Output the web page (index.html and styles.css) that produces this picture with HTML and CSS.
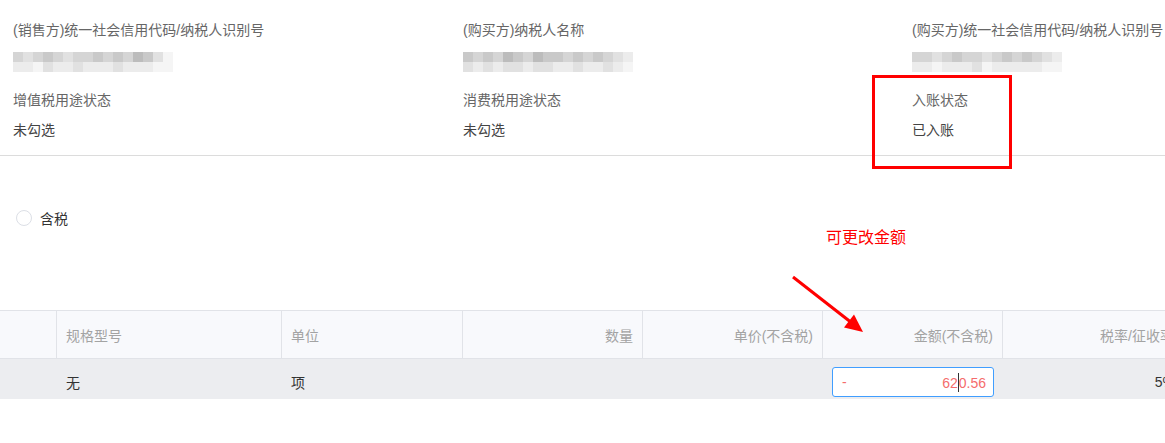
FILE: index.html
```html
<!DOCTYPE html>
<html lang="zh-CN">
  <head>
    <meta charset="UTF-8">
    <meta name="viewport" content="width=device-width, initial-scale=1.0">
    <title>发票明细</title>
    <link rel="stylesheet" href="styles.css">
  </head>
  <body>

    <div class="page">

      <section class="summary">
        <div class="col">
          <div class="field">
            <div class="label">(销售方)统一社会信用代码/纳税人识别号</div>
            <div class="value">
              <div class="mosaic">
                <div class="mosaic-row"><i class="m3"></i><i class="m4"></i><i class="m3"></i><i class="m2"></i><i class="m3"></i><i class="m4"></i><i class="m3"></i><i class="m3"></i><i class="m2"></i><i class="m3"></i><i class="m2"></i><i class="m3"></i><i class="m1"></i><i class="m2"></i><i class="m4"></i><i class="m6"></i></div>
                <div class="mosaic-row"><i class="m5"></i><i class="m5"></i><i class="m6"></i><i class="m4"></i><i class="m5"></i><i class="m5"></i><i class="m4"></i><i class="m5"></i><i class="m5"></i><i class="m5"></i><i class="m4"></i><i class="m5"></i><i class="m5"></i><i class="m5"></i><i class="m6"></i><i class="m6"></i></div>
              </div>
            </div>
          </div>
          <div class="field">
            <div class="label">增值税用途状态</div>
            <div class="value">未勾选</div>
          </div>
        </div>

        <div class="col">
          <div class="field">
            <div class="label">(购买方)纳税人名称</div>
            <div class="value">
              <div class="mosaic">
                <div class="mosaic-row"><i class="m2"></i><i class="m3"></i><i class="m2"></i><i class="m3"></i><i class="m1"></i><i class="m2"></i><i class="m3"></i><i class="m1"></i><i class="m2"></i><i class="m2"></i><i class="m3"></i><i class="m2"></i><i class="m3"></i><i class="m2"></i><i class="m3"></i><i class="m4"></i><i class="m5"></i></div>
                <div class="mosaic-row"><i class="m4"></i><i class="m5"></i><i class="m4"></i><i class="m5"></i><i class="m4"></i><i class="m4"></i><i class="m5"></i><i class="m4"></i><i class="m4"></i><i class="m5"></i><i class="m5"></i><i class="m4"></i><i class="m5"></i><i class="m5"></i><i class="m4"></i><i class="m5"></i><i class="m6"></i></div>
              </div>
            </div>
          </div>
          <div class="field">
            <div class="label">消费税用途状态</div>
            <div class="value">未勾选</div>
          </div>
        </div>

        <div class="col">
          <div class="field">
            <div class="label">(购买方)统一社会信用代码/纳税人识别号</div>
            <div class="value">
              <div class="mosaic">
                <div class="mosaic-row"><i class="m3"></i><i class="m3"></i><i class="m4"></i><i class="m3"></i><i class="m2"></i><i class="m3"></i><i class="m3"></i><i class="m4"></i><i class="m3"></i><i class="m2"></i><i class="m3"></i><i class="m2"></i><i class="m3"></i><i class="m4"></i><i class="m5"></i></div>
                <div class="mosaic-row"><i class="m5"></i><i class="m5"></i><i class="m6"></i><i class="m5"></i><i class="m5"></i><i class="m5"></i><i class="m4"></i><i class="m6"></i><i class="m5"></i><i class="m5"></i><i class="m5"></i><i class="m5"></i><i class="m5"></i><i class="m6"></i><i class="m6"></i></div>
              </div>
            </div>
          </div>
          <div class="field marked">
            <div class="label">入账状态</div>
            <div class="value">已入账</div>
            <span class="mark-box"></span>
          </div>
        </div>
      </section>

      <section class="options">
        <label class="radio"><span class="radio-dot"></span>含税</label>
        <div class="note">可更改金额</div>
      </section>

      <section class="lines">
        <div class="row head">
          <div class="cell"></div>
          <div class="cell">规格型号</div>
          <div class="cell">单位</div>
          <div class="cell num">数量</div>
          <div class="cell num">单价(不含税)</div>
          <div class="cell num">金额(不含税)</div>
          <div class="cell num">税率/征收率</div>
        </div>
        <div class="row body">
          <div class="cell"></div>
          <div class="cell">无</div>
          <div class="cell">项</div>
          <div class="cell num"></div>
          <div class="cell num"></div>
          <div class="cell">
            <div class="amount-input">
              <span class="sign">-</span>
              <span class="amount">62<span class="caret"></span>0.56</span>
            </div>
          </div>
          <div class="cell num">5%</div>
        </div>
      </section>

      <svg class="arrow" width="90" height="80" viewBox="0 0 90 80">
        <line x1="13" y1="17" x2="70" y2="61.5" stroke="#ff0000" stroke-width="3"/>
        <polygon points="83,72 64,67.5 74,54.5" fill="#ff0000"/>
      </svg>

    </div>

  </body>
</html>
```

FILE: styles.css
```css
html, body {
  margin: 0;
  padding: 0;
  box-sizing: border-box;
}
*, *:before, *:after {
  box-sizing: inherit;
}
body {
  width: 1165px;
  height: 443px;
  overflow: hidden;
  background-color: #fff;
  font-family: 'Liberation Sans', 'Noto Sans CJK SC', sans-serif;
  font-size: 14px;
  color: #333;
}
.page {
  position: relative;
  width: 1165px;
  height: 443px;
  overflow: hidden;
}

/* top summary */
.summary {
  display: grid;
  grid-template-columns: 450px 449px 1fr;
  padding: 20px 0 15px 13px;
  border-bottom: 1px solid #dcdcdc;
}
.field + .field {
  margin-top: 20px;
}
.field.marked {
  position: relative;
}
.label {
  line-height: 20px;
  height: 20px;
  color: #666;
  white-space: nowrap;
}
.value {
  margin-top: 10px;
  line-height: 20px;
  height: 20px;
  color: #444;
}
.mosaic {
  padding-top: 2px;
  filter: blur(0.5px);
}
.mosaic-row {
  display: flex;
  height: 10px;
}
.mosaic-row i {
  display: block;
  width: 10px;
  height: 10px;
}
.m1 { background-color: #bcbcbc; }
.m2 { background-color: #c9c9c9; }
.m3 { background-color: #d5d5d5; }
.m4 { background-color: #e1e1e1; }
.m5 { background-color: #ececec; }
.m6 { background-color: #f5f5f5; }
.mark-box {
  position: absolute;
  left: -40px;
  top: -15px;
  width: 140px;
  height: 94px;
  border: 3px solid #ff0000;
}

/* options */
.options {
  position: relative;
  height: 154px;
  padding: 54px 0 0 16px;
}
.radio {
  display: flex;
  align-items: center;
  height: 16px;
  color: #333;
}
.radio-dot {
  width: 16px;
  height: 16px;
  border: 1px solid #dcdfe6;
  border-radius: 50%;
  margin-right: 8px;
  background-color: #fff;
}
.note {
  position: absolute;
  left: 826px;
  top: 72px;
  font-size: 16px;
  line-height: 20px;
  color: #ff0000;
}

/* goods table */
.lines {
  width: 1184px;
}
.row {
  display: grid;
  grid-template-columns: 57px 225px 181px 180px 180px 180px 181px;
}
.row.head {
  height: 49px;
  background-color: #f8f9fc;
  border-top: 1px solid #e1e3e8;
  border-bottom: 1px solid #e1e3e8;
  color: #a3a3a3;
}
.row.head .cell {
  border-right: 1px solid #e1e3e8;
}
.row.body {
  height: 40px;
  padding-top: 6px;
  background-color: #ecedf0;
  color: #333;
}
.cell {
  display: flex;
  align-items: center;
  padding: 0 9px;
  white-space: nowrap;
  overflow: hidden;
}
.cell.num {
  justify-content: flex-end;
}
.amount-input {
  display: flex;
  align-items: center;
  justify-content: space-between;
  width: 100%;
  height: 30px;
  padding: 0 7px 0 9px;
  background-color: #fff;
  border: 1px solid #409eff;
  border-radius: 3px;
  color: #f56c6c;
}
.caret {
  display: inline-block;
  width: 1px;
  height: 19px;
  margin: 0 0 -4px;
  background-color: #333;
}

.arrow {
  position: absolute;
  left: 780px;
  top: 260px;
}
```
